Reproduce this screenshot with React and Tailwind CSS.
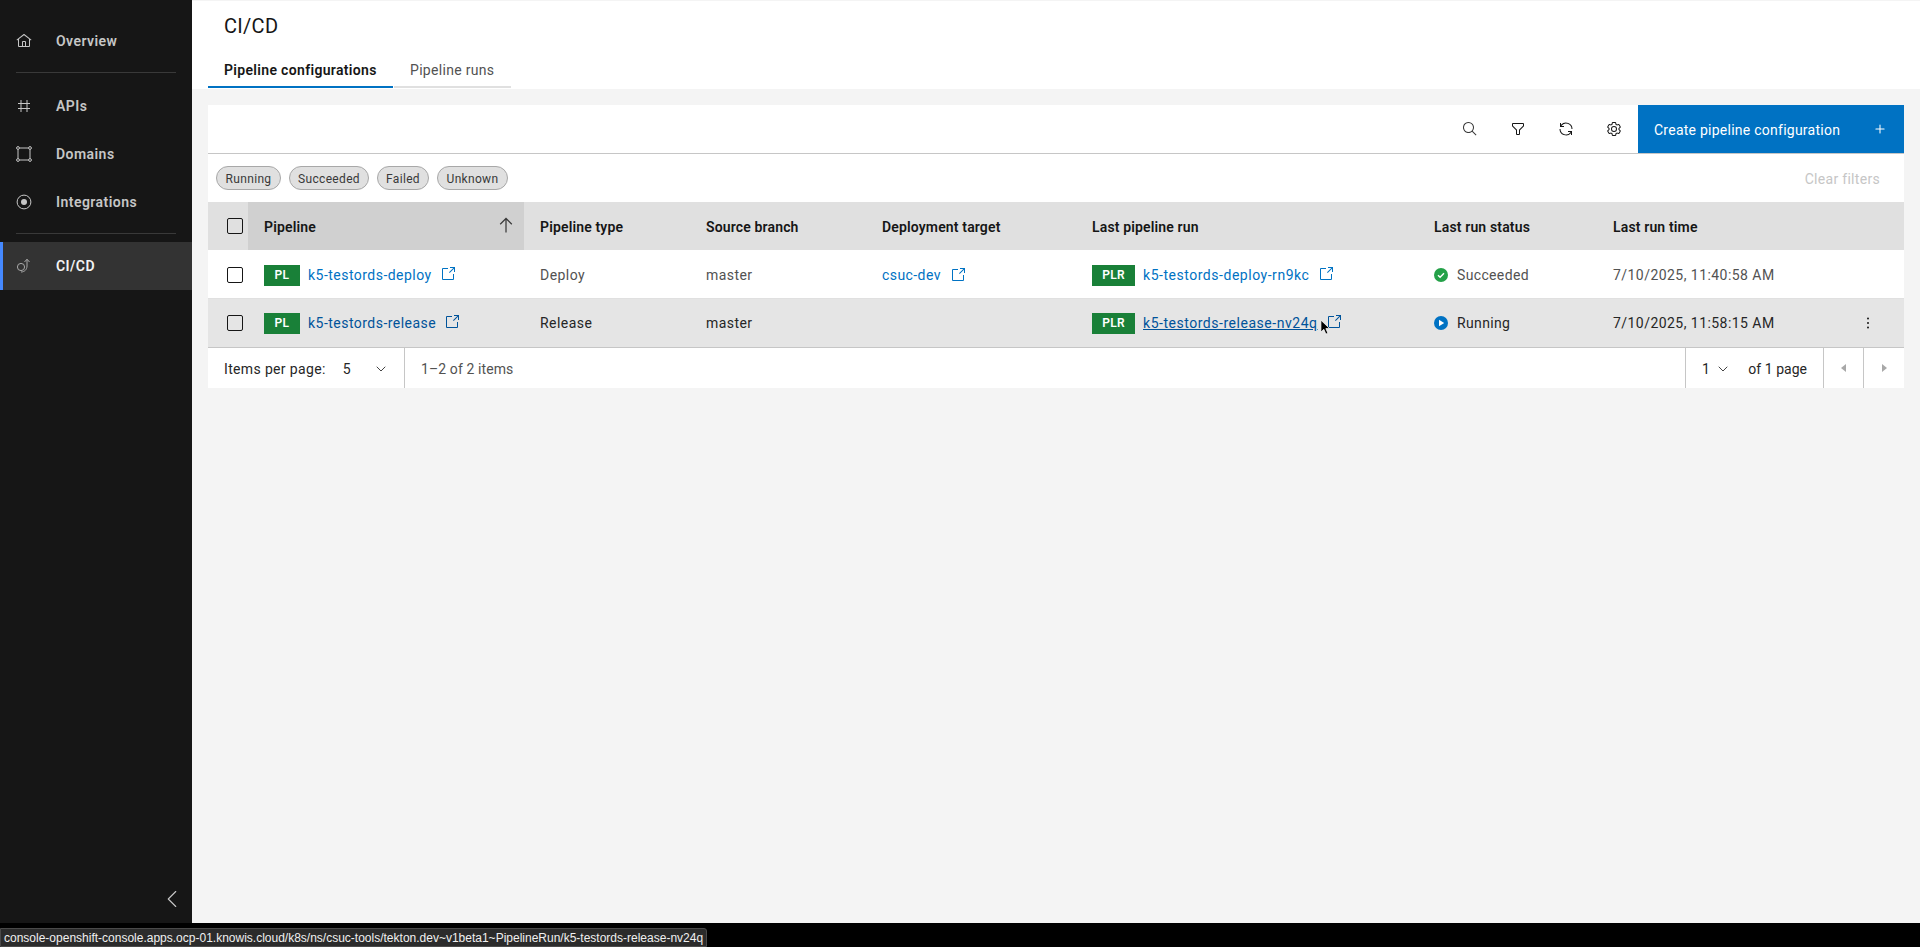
import { ChevronDown, ChevronLeft, Plus } from "lucide-react";

const FONT = "font-['Roboto',sans-serif]";
const grid =
  "grid grid-cols-[40px_276px_166px_176px_210px_342px_179px_1fr] items-center";

const Launch = ({ className }) => (
  <svg viewBox="0 0 32 32" fill="currentColor" className={`w-4 h-4 shrink-0 ${className || ""}`}>
    <path d="M26,28H6a2.0027,2.0027,0,0,1-2-2V6A2.0027,2.0027,0,0,1,6,4H16V6H6V26H26V16h2V26A2.0027,2.0027,0,0,1,26,28Z" />
    <polygon points="20 2 20 4 26.586 4 18 12.586 19.414 14 28 5.414 28 12 30 12 30 2 20 2" />
  </svg>
);

const HomeIcon = () => (
  <svg viewBox="0 0 32 32" fill="currentColor" className="w-4 h-4">
    <path d="M16.6123,2.2138a1.01,1.01,0,0,0-1.2427,0L1,13.4194l1.2427,1.5717L4,13.6209V26a2.0041,2.0041,0,0,0,2,2H26a2.0037,2.0037,0,0,0,2-2V13.63L29.7573,15,31,13.4282ZM18,26H14V18h4Zm2,0V18a2.0023,2.0023,0,0,0-2-2H14a2.002,2.002,0,0,0-2,2v8H6V12.0615l10-7.79,10,7.8005V26Z" />
  </svg>
);

const HashIcon = () => (
  <svg viewBox="0 0 16 16" fill="none" stroke="currentColor" strokeWidth="1" className="w-4 h-4">
    <path d="M5 2v12M11 2v12M2 5.5h12M2 10.5h12" />
  </svg>
);

const DomainIcon = () => (
  <svg viewBox="0 0 16 16" fill="none" stroke="currentColor" strokeWidth="1" className="w-4 h-4">
    <path d="M3.5 2h9M14 3.5v9M12.5 14h-9M2 12.5v-9" />
    <circle cx="2" cy="2" r="1.4" />
    <circle cx="14" cy="2" r="1.4" />
    <circle cx="14" cy="14" r="1.4" />
    <circle cx="2" cy="14" r="1.4" />
  </svg>
);

const RadioIcon = () => (
  <svg viewBox="0 0 16 16" fill="none" stroke="currentColor" strokeWidth="1" className="w-4 h-4">
    <circle cx="8" cy="8" r="6.9" />
    <circle cx="8" cy="8" r="3" fill="currentColor" stroke="none" />
  </svg>
);

const CicdIcon = () => (
  <svg viewBox="0 0 16 16" fill="none" stroke="currentColor" strokeWidth="1" className="w-4 h-4">
    <circle cx="5" cy="9" r="3.6" />
    <path d="M5 14c3.5 0 6-2.5 6-6V1.5M8.5 4L11 1.2 13.5 4" />
  </svg>
);

const SideItem = ({ icon, label, active }) => (
  <div
    className={`h-12 flex items-center text-sm font-semibold ${
      active
        ? "bg-[#333333] text-[#f4f4f4] border-l-[3px] border-[#4589ff] pl-[13px]"
        : "text-[#c6c6c6] pl-4"
    }`}
  >
    <span className={`w-10 ${active ? "text-[#a8a8a8]" : "text-[#c6c6c6]"}`}>{icon}</span>
    <span className="tracking-[0.45px]">{label}</span>
  </div>
);

const Sidebar = () => (
  <aside className="w-[192px] shrink-0 bg-[#161616] flex flex-col pt-[17px] pb-[9px]">
    <SideItem icon={<HomeIcon />} label="Overview" />
    <div className="mx-4 mt-[7px] mb-[9px] h-px bg-[#393939]" />
    <SideItem icon={<HashIcon />} label="APIs" />
    <SideItem icon={<DomainIcon />} label="Domains" />
    <SideItem icon={<RadioIcon />} label="Integrations" />
    <div className="mx-4 mt-[7px] mb-2 h-px bg-[#393939]" />
    <SideItem icon={<CicdIcon />} label="CI/CD" active />
    <div className="mt-auto flex justify-end pr-[5px] text-[#c6c6c6]">
      <ChevronLeft className="w-[30px] h-[30px]" strokeWidth={0.9} />
    </div>
  </aside>
);

const Chip = ({ label, width }) => (
  <span
    className={`h-6 pt-px flex items-center justify-center rounded-full border border-[#a8a8a8] bg-[#e0e0e0] text-xs text-[#393939] tracking-[0.32px] ${width}`}
  >
    {label}
  </span>
);

const Checkbox = () => (
  <span className="block w-4 h-4 rounded-[2px] border border-[#161616] justify-self-start ml-[19px]" />
);

const Tag = ({ label, width }) => (
  <span
    className={`h-[21px] flex items-center justify-center bg-[#198038] text-white text-xs font-semibold tracking-[0.3px] shrink-0 ${width}`}
  >
    {label}
  </span>
);

const ToolIcon = ({ children, className }) => (
  <span className={`w-12 h-12 flex items-center justify-center text-[#161616] ${className || ""}`}>{children}</span>
);

const HeadCell = ({ children, sorted }) => (
  <div
    className={`h-12 pl-4 pt-[2px] flex items-center text-sm font-semibold tracking-[0.15px] text-[#161616] ${
      sorted ? "bg-[#d0d0d0] justify-between pr-2" : ""
    }`}
  >
    {children}
  </div>
);

const PipelineLink = ({ tag, tagWidth, label, dark, underline, gap }) => (
  <div className="flex items-center">
    <Tag label={tag} width={tagWidth} />
    <a
      className={`ml-2 -mt-px text-sm ${tag === "PL" ? "tracking-[0.47px]" : "tracking-[0.53px]"} ${
        dark ? "text-[#00539a]" : "text-[#0072c3]"
      } ${underline ? "underline" : ""}`}
    >
      {label}
    </a>
    <Launch className={`-mt-[2px] ${gap} ${dark ? "text-[#00539a]" : "text-[#0072c3]"}`} />
  </div>
);

const SuccessIcon = () => (
  <svg viewBox="0 0 14 14" className="w-[14px] h-[14px] shrink-0">
    <circle cx="7" cy="7" r="7" fill="#24a148" />
    <path d="M4 7.2l2.1 2.1L10 5.2" fill="none" stroke="#fff" strokeWidth="1.4" />
  </svg>
);

const RunningIcon = () => (
  <svg viewBox="0 0 14 14" className="w-[14px] h-[14px] shrink-0">
    <circle cx="7" cy="7" r="7" fill="#0072c3" />
    <path d="M5 3.8v6.4L10.2 7z" fill="#fff" />
  </svg>
);

const Kebab = () => (
  <svg viewBox="0 0 16 16" fill="#161616" className="w-4 h-4">
    <circle cx="8" cy="3.5" r="1" />
    <circle cx="8" cy="8" r="1" />
    <circle cx="8" cy="12.5" r="1" />
  </svg>
);

const Toolbar = () => (
  <div className="h-[49px] bg-white border-b border-[#c6c6c6] flex justify-end">
    <div className="flex items-start">
      <ToolIcon className="text-[#393939]">
        <svg viewBox="0 0 32 32" fill="currentColor" className="w-4 h-4 mb-px">
          <path d="M29,27.5859l-7.5521-7.5521a11.0177,11.0177,0,1,0-1.4141,1.4141L27.5859,29ZM4,13a9,9,0,1,1,9,9A9.01,9.01,0,0,1,4,13Z" />
        </svg>
      </ToolIcon>
      <ToolIcon>
        <svg viewBox="0 0 32 32" fill="currentColor" className="w-4 h-4 mb-px">
          <path d="M18,28H14a2,2,0,0,1-2-2V18.41L4.59,11A2,2,0,0,1,4,9.59V6A2,2,0,0,1,6,4H26a2,2,0,0,1,2,2V9.59A2,2,0,0,1,27.41,11L20,18.41V26A2,2,0,0,1,18,28ZM6,6V9.59l8,8V26h4V17.59l8-8V6Z" />
        </svg>
      </ToolIcon>
      <ToolIcon>
        <svg viewBox="0 0 32 32" fill="currentColor" className="w-4 h-4 mb-px">
          <path d="M12 10H6.78A11 11 0 0 1 27 16h2A13 13 0 0 0 6 7.68V4H4v8h8zM20 22h5.22A11 11 0 0 1 5 16H3a13 13 0 0 0 23 8.32V28h2v-8h-8z" />
        </svg>
      </ToolIcon>
      <ToolIcon>
        <svg viewBox="0 0 32 32" fill="currentColor" className="w-4 h-4 mb-px">
          <path d="M27,16.76c0-.25,0-.5,0-.76s0-.51,0-.77l1.92-1.68A2,2,0,0,0,29.3,11L26.94,7a2,2,0,0,0-1.73-1,2,2,0,0,0-.64.1l-2.43.82a11.35,11.35,0,0,0-1.31-.75l-.51-2.52a2,2,0,0,0-2-1.61H13.64a2,2,0,0,0-2,1.61l-.51,2.52a11.48,11.48,0,0,0-1.32.75L7.43,6.06A2,2,0,0,0,6.79,6,2,2,0,0,0,5.06,7L2.7,11a2,2,0,0,0,.41,2.51L5,15.24c0,.25,0,.5,0,.76s0,.51,0,.77L3.11,18.45A2,2,0,0,0,2.7,21L5.06,25a2,2,0,0,0,1.73,1,2,2,0,0,0,.64-.1l2.43-.82a11.35,11.35,0,0,0,1.31.75l.51,2.52a2,2,0,0,0,2,1.61h4.72a2,2,0,0,0,2-1.61l.51-2.52a11.48,11.48,0,0,0,1.32-.75l2.42.82a2,2,0,0,0,.64.1,2,2,0,0,0,1.73-1L29.3,21a2,2,0,0,0-.41-2.51ZM25.21,24l-3.43-1.16a8.86,8.86,0,0,1-2.71,1.57L18.36,28H13.64l-.71-3.55a9.36,9.36,0,0,1-2.7-1.57L6.79,24,4.43,20l2.72-2.4a8.9,8.9,0,0,1,0-3.13L4.43,12,6.79,8l3.43,1.16a8.86,8.86,0,0,1,2.71-1.57L13.64,4h4.72l.71,3.55a9.36,9.36,0,0,1,2.7,1.57L25.21,8,27.57,12l-2.72,2.4a8.9,8.9,0,0,1,0,3.13L27.57,20Z" />
          <path d="M16,22a6,6,0,1,1,6-6A5.94,5.94,0,0,1,16,22Zm0-10a3.91,3.91,0,0,0-4,4,3.91,3.91,0,0,0,4,4,3.91,3.91,0,0,0,4-4A3.91,3.91,0,0,0,16,12Z" />
        </svg>
      </ToolIcon>
    </div>
    <button className="w-[266px] h-12 pt-px bg-[#0072c3] text-white text-sm pl-4 pr-[17px] flex items-center justify-between tracking-[0.25px]">
      <span>Create pipeline configuration</span>
      <Plus className="w-[14px] h-[14px] mb-px" strokeWidth={1.8} />
    </button>
  </div>
);

const Table = () => (
  <div>
    <div className={`${grid} h-12 bg-[#e0e0e0]`}>
      <Checkbox />
      <HeadCell sorted>
        <span>Pipeline</span>
        <svg viewBox="0 0 32 32" fill="#393939" className="w-5 h-5 mb-[5px]">
          <polygon points="16 4 6 14 7.41 15.41 15 7.83 15 28 17 28 17 7.83 24.59 15.41 26 14 16 4" />
        </svg>
      </HeadCell>
      <HeadCell>Pipeline type</HeadCell>
      <HeadCell>Source branch</HeadCell>
      <HeadCell>Deployment target</HeadCell>
      <HeadCell>Last pipeline run</HeadCell>
      <HeadCell>Last run status</HeadCell>
      <HeadCell>Last run time</HeadCell>
    </div>

    <div className={`${grid} h-[49px] pt-[2px] bg-white border-b border-[#e0e0e0] text-sm text-[#525252] tracking-[0.45px]`}>
      <Checkbox />
      <div className="pl-4">
        <PipelineLink tag="PL" tagWidth="w-9" label="k5-testords-deploy" gap="ml-[8px]" />
      </div>
      <div className="pl-4">Deploy</div>
      <div className="pl-4">master</div>
      <div className="pl-4 flex items-center">
        <a className="text-[#0072c3] tracking-[0.42px]">csuc-dev</a>
        <Launch className="ml-[9px] text-[#0072c3]" />
      </div>
      <div className="pl-4">
        <PipelineLink tag="PLR" tagWidth="w-[43px]" label="k5-testords-deploy-rn9kc" gap="ml-[9px]" />
      </div>
      <div className="pl-4 flex items-center gap-[9px]">
        <SuccessIcon />
        <span className="tracking-[0.35px]">Succeeded</span>
      </div>
      <div className="pl-4">7/10/2025, 11:40:58 AM</div>
    </div>

    <div className={`${grid} relative h-[49px] bg-[#e5e5e5] border-b border-[#c6c6c6] text-sm text-[#262626] tracking-[0.45px]`}>
      <Checkbox />
      <div className="pl-4">
        <PipelineLink tag="PL" tagWidth="w-9" label="k5-testords-release" dark gap="ml-[8px]" />
      </div>
      <div className="pl-4">Release</div>
      <div className="pl-4">master</div>
      <div />
      <div className="pl-4">
        <PipelineLink tag="PLR" tagWidth="w-[43px]" label="k5-testords-release-nv24q" dark underline gap="ml-[8px]" />
      </div>
      <div className="pl-4 flex items-center gap-[9px]">
        <RunningIcon />
        <span className="tracking-[0.35px]">Running</span>
      </div>
      <div className="pl-4 flex items-center justify-between pr-[28px]">
        <span>7/10/2025, 11:58:15 AM</span>
        <Kebab />
      </div>
      {/* mouse pointer */}
      <svg viewBox="0 0 12 18" className="absolute left-[1112px] top-[20px] w-[11px] h-[17px]">
        <path d="M1 1v13l3.2-3 2.2 5.2 2.2-1-2.2-5H10.5z" fill="#000" stroke="#fff" strokeWidth="0.8" />
      </svg>
    </div>
  </div>
);

const Pagination = () => (
  <div className="h-10 bg-white flex text-sm text-[#393939] tracking-[0.35px]">
    <div className="w-[197px] pt-px border-r border-[#c6c6c6] flex items-center pl-4 text-[#262626]">
      <span>Items per page:</span>
      <span className="ml-[17px]">5</span>
      <ChevronDown className="w-4 h-4 ml-[22px]" strokeWidth={1.3} />
    </div>
    <div className="pl-4 pt-px flex items-center text-[#525252] tracking-[0.1px]">1–2 of 2 items</div>
    <div className="ml-auto flex">
      <div className="w-[139px] pt-px border-l border-r border-[#c6c6c6] flex items-center pl-4 text-[#262626]">
        <span>1</span>
        <ChevronDown className="w-4 h-4 ml-[5px]" strokeWidth={1.3} />
        <span className="ml-[17px] tracking-[0.05px]">of 1 page</span>
      </div>
      <div className="w-10 border-r border-[#c6c6c6] flex items-center justify-center">
        <span className="w-0 h-0 border-y-[4px] border-y-transparent border-r-[5px] border-r-[#a8a8a8]" />
      </div>
      <div className="w-10 flex items-center justify-center">
        <span className="w-0 h-0 border-y-[4px] border-y-transparent border-l-[5px] border-l-[#a8a8a8]" />
      </div>
    </div>
  </div>
);

export default function App() {
  return (
    <div className={`h-[947px] flex flex-col overflow-hidden bg-black ${FONT}`}>
      <div className="flex h-[923px]">
        <Sidebar />
        <main className="flex-1 bg-[#f4f4f4]">
          <header className="h-[88px] mt-px bg-white pl-4">
            <h1 className="pt-[11px] pl-4 text-xl leading-7 text-[#161616] tracking-[0.3px]">CI/CD</h1>
            <div className="mt-[7px] flex gap-px text-sm">
              <div className="w-[185px] h-[41px] pt-[7px] pl-4 flex items-center font-semibold text-[#161616] border-b-2 border-[#0072c3] tracking-[0.33px]">
                Pipeline configurations
              </div>
              <div className="w-[117px] h-[41px] pt-[7px] pl-[16px] flex items-center text-[#525252] border-b-2 border-[#e0e0e0] tracking-[0.3px]">
                Pipeline runs
              </div>
            </div>
          </header>
          <section className="mt-4 mx-4">
            <Toolbar />
            <div className="h-12 bg-white flex items-center pl-2 pr-6 gap-2">
              <Chip label="Running" width="w-[65px]" />
              <Chip label="Succeeded" width="w-[80px]" />
              <Chip label="Failed" width="w-[52px]" />
              <Chip label="Unknown" width="w-[71px]" />
              <span className="ml-auto pt-px text-sm text-[#c6c6c6] tracking-[0.3px]">Clear filters</span>
            </div>
            <Table />
            <Pagination />
          </section>
        </main>
      </div>
      <div className="h-6 pt-[5px]">
        <div className="w-[707px] h-[19px] bg-[#2b2b2b] border border-[#4a4a4a] rounded-tr-[3px] pl-[3px] flex items-center text-xs text-[#f0f0f0] whitespace-nowrap font-['Liberation_Sans',sans-serif]">
          console-openshift-console.apps.ocp-01.knowis.cloud/k8s/ns/csuc-tools/tekton.dev~v1beta1~PipelineRun/k5-testords-release-nv24q
        </div>
      </div>
    </div>
  );
}
